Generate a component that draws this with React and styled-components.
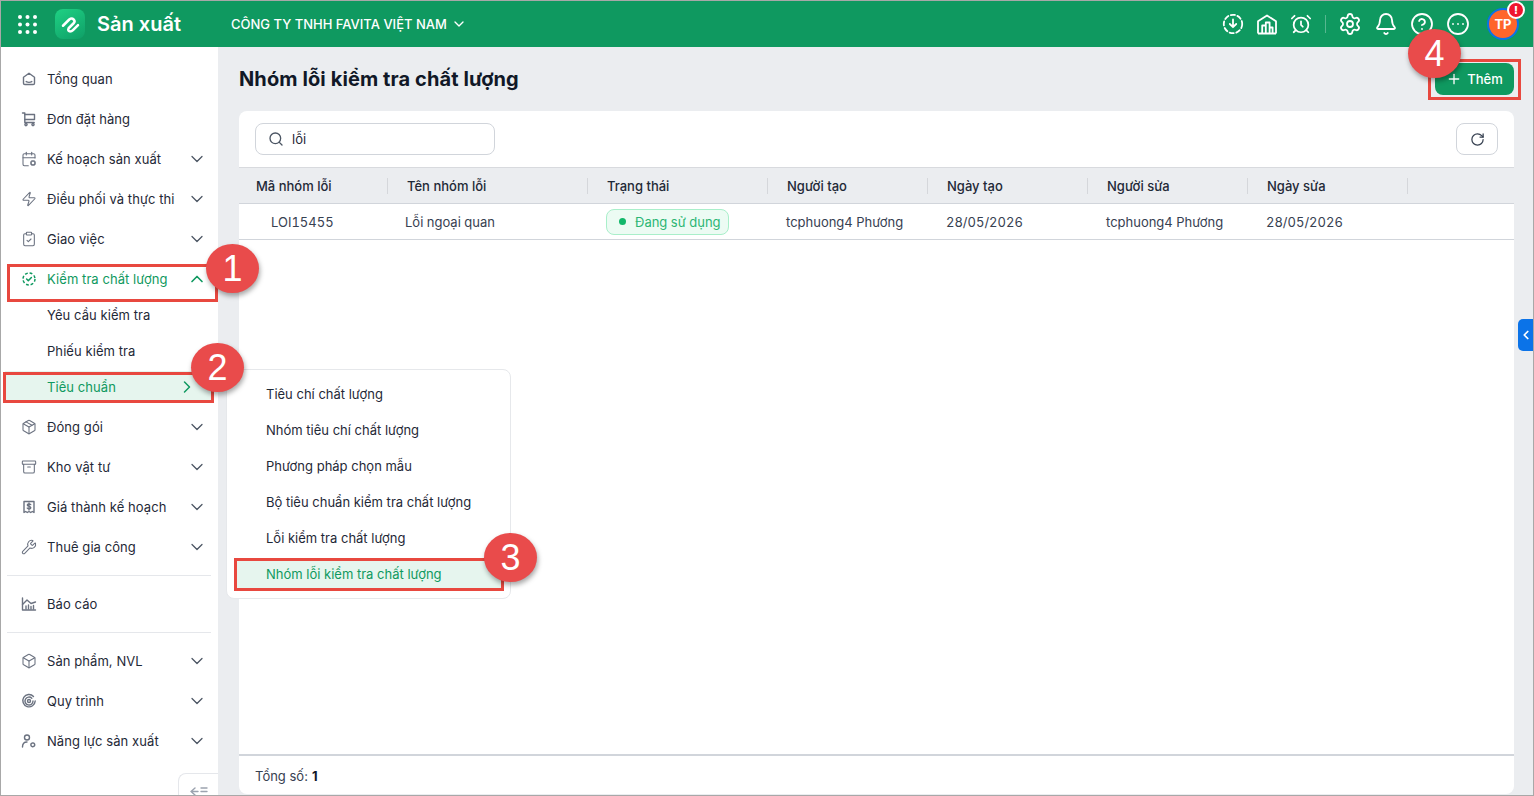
import React from 'react';
import styled, { createGlobalStyle } from 'styled-components';
import {
  AlarmClock, Archive, Bell, Box, CalendarCog, ChevronDown, ChevronLeft, ChevronRight, ChevronUp,
  CircleEllipsis, CircleHelp, ClipboardCheck, Package, Plus, RotateCw, Search, Settings,
  Wrench, Zap
} from 'lucide-react';

const GREEN = '#0f9960';
const TEXT = '#1f2937';

const GlobalStyle = createGlobalStyle`
  html, body { margin: 0; padding: 0; }
  body { font-family: Inter, "Noto Sans", sans-serif; color: ${TEXT}; font-size: 13px; }
  * { box-sizing: border-box; }
`;

const Frame = styled.div`
  position: relative;
  width: 1534px;
  height: 796px;
  border: 1px solid #a8a8a8;
  display: flex;
  flex-direction: column;
  overflow: hidden;
  background: #ebedf0;
`;

const Header = styled.header`
  height: 46px;
  flex: none;
  background: ${GREEN};
  color: #fff;
  display: flex;
  align-items: center;
  padding: 0 14px 0 17px;
`;

const Brand = styled.div`
  display: flex;
  align-items: center;
  gap: 12px;
  margin-left: 18px;
  font-size: 20px;
  font-weight: 600;
`;

const LogoBox = styled.div`
  width: 30px;
  height: 30px;
  border-radius: 8px;
  background: linear-gradient(150deg, #1fd184, #0f9f67);
  display: flex;
  align-items: center;
  justify-content: center;
`;

const Company = styled.div`
  display: flex;
  align-items: center;
  gap: 4px;
  margin-left: 50px;
  font-size: 13px;
  font-weight: 500;
`;

const HeaderTools = styled.div`
  margin-left: auto;
  display: flex;
  align-items: center;
`;

const ToolGroup = styled.div`
  display: flex;
  align-items: center;
  gap: ${(p) => p.$gap}px;
`;

const ToolDivider = styled.span`
  width: 1px;
  height: 18px;
  margin: 0 12px;
  background: rgba(255, 255, 255, 0.3);
`;

const Avatar = styled.div`
  position: relative;
  width: 32px;
  height: 32px;
  margin-left: 17px;
  border-radius: 50%;
  border: 2px solid #0b73e8;
  background: #ff652b;
  display: flex;
  align-items: center;
  justify-content: center;
  font-size: 13px;
  font-weight: 700;
`;

const AlertDot = styled.span`
  position: absolute;
  top: -9px;
  right: -8px;
  width: 18px;
  height: 18px;
  border-radius: 50%;
  border: 2px solid #fff;
  background: #f0142f;
  display: flex;
  align-items: center;
  justify-content: center;
  font-size: 11px;
  font-weight: 800;
`;

const Body = styled.div`
  flex: 1;
  display: flex;
  min-height: 0;
`;

const Sidebar = styled.aside`
  position: relative;
  width: 217px;
  flex: none;
  background: #fff;
  padding-top: 12px;
`;

const NavItem = styled.div`
  height: 40px;
  display: flex;
  align-items: center;
  padding: 0 11px 0 20px;
  letter-spacing: 0.07px;
  color: ${(p) => (p.$active ? GREEN : TEXT)};
  svg.lead { color: ${(p) => (p.$active ? GREEN : '#6b7280')}; }
`;

const NavLabel = styled.span`
  margin-left: 10px;
  flex: 1;
  white-space: nowrap;
`;

const SubList = styled.div`
  display: flex;
  flex-direction: column;
  gap: 4px;
  margin-bottom: 4px;
`;

const SubItem = styled.div`
  height: 32px;
  margin: 0 7px 0 4px;
  padding: 0 14px 0 42px;
  letter-spacing: 0.07px;
  display: flex;
  align-items: center;
  justify-content: space-between;
  background: ${(p) => (p.$active ? '#e6f5ee' : 'transparent')};
  color: ${(p) => (p.$active ? GREEN : TEXT)};
`;

const NavDivider = styled.hr`
  height: 1px;
  margin: 8px 7px 8px 6px;
  border: 0;
  background: #e5e7eb;
`;

const CollapseTab = styled.div`
  position: absolute;
  right: 0;
  bottom: 0;
  width: 40px;
  height: 22px;
  padding: 12px 0 0 11px;
  border: 1px solid #e5e7eb;
  border-width: 1px 0 0 1px;
  border-top-left-radius: 8px;
  overflow: hidden;
  color: #9ca3af;
`;

const Main = styled.main`
  flex: 1;
  min-width: 0;
  display: flex;
  flex-direction: column;
  padding: 0 19px 1px 21px;
`;

const TitleRow = styled.div`
  height: 64px;
  flex: none;
  display: flex;
  align-items: center;
  justify-content: space-between;
`;

const Title = styled.h1`
  margin: 0;
  font-size: 20px;
  font-weight: 700;
  letter-spacing: 0.1px;
  color: #111827;
`;

const AddButton = styled.button`
  width: 79px;
  height: 32px;
  border: 0;
  border-radius: 8px;
  background: ${GREEN};
  color: #fff;
  font: 500 13px Inter, sans-serif;
  display: flex;
  align-items: center;
  justify-content: center;
  gap: 5px;
`;

const Card = styled.section`
  flex: 1;
  min-height: 0;
  display: flex;
  flex-direction: column;
  background: #fff;
  border-radius: 8px;
`;

const Toolbar = styled.div`
  height: 56px;
  flex: none;
  display: flex;
  align-items: center;
  justify-content: space-between;
  padding: 0 16px;
`;

const SearchBox = styled.div`
  width: 240px;
  height: 32px;
  border: 1px solid #d1d5db;
  border-radius: 8px;
  display: flex;
  align-items: center;
  gap: 8px;
  padding: 0 12px;
  color: #4b5563;
`;

const SearchText = styled.span`
  color: ${TEXT};
`;

const RefreshButton = styled.button`
  width: 42px;
  height: 32px;
  border: 1px solid #d1d5db;
  border-radius: 8px;
  background: #fff;
  color: #374151;
  display: flex;
  align-items: center;
  justify-content: center;
`;

const COLUMNS = '149px 200px 180px 160px 160px 160px 160px 1fr';

const TableHead = styled.div`
  height: 37px;
  flex: none;
  display: grid;
  grid-template-columns: ${COLUMNS};
  align-items: center;
  background: #ebedf0;
  border-top: 1px solid #d8dade;
  border-bottom: 1px solid #d1d5db;
`;

const HeadCell = styled.div`
  position: relative;
  padding-left: ${(p) => (p.$first ? 17 : 19)}px;
  font-weight: 500;
  color: ${TEXT};
  &::after {
    content: '';
    position: absolute;
    right: 0;
    top: 0;
    width: 1px;
    height: 16px;
    background: #d5d7db;
    display: ${(p) => (p.$plain ? 'none' : 'block')};
  }
`;

const TableRow = styled.div`
  height: 36px;
  flex: none;
  display: grid;
  grid-template-columns: ${COLUMNS};
  align-items: center;
  border-bottom: 1px solid #d1d5db;
  color: #374151;
  font-variant-numeric: tabular-nums;
`;

const Cell = styled.div`
  padding-left: ${(p) => p.$pad || 18}px;
  white-space: nowrap;
`;

const StatusBadge = styled.span`
  display: inline-flex;
  align-items: center;
  gap: 9px;
  width: 123px;
  height: 26px;
  padding-left: 12px;
  border: 1px solid #a9efca;
  border-radius: 8px;
  background: #ecfbf3;
  color: #2bb673;
  &::before {
    content: '';
    width: 7px;
    height: 7px;
    border-radius: 50%;
    background: #12b76a;
  }
`;

const Spacer = styled.div`
  flex: 1;
`;

const Footer = styled.div`
  height: 40px;
  flex: none;
  display: flex;
  align-items: center;
  gap: 4px;
  padding: 1px 0 0 16px;
  border-top: 2px solid #d1d5db;
  color: #374151;
  b { font-weight: 700; color: #111827; }
`;

const Popup = styled.div`
  position: absolute;
  left: 225px;
  top: 368px;
  width: 285px;
  height: 230px;
  padding: 9px 8px;
  display: flex;
  flex-direction: column;
  gap: 4px;
  background: #fff;
  border: 1px solid #e6e8eb;
  border-radius: 8px;
`;

const PopupItem = styled.div`
  height: 32px;
  flex: none;
  padding: 0 0 2px 31px;
  display: flex;
  align-items: center;
  background: ${(p) => (p.$active ? '#e6f5ee' : 'transparent')};
  color: ${(p) => (p.$active ? GREEN : TEXT)};
`;

const RedBox = styled.div`
  position: absolute;
  left: ${(p) => p.$x}px;
  top: ${(p) => p.$y}px;
  width: ${(p) => p.$w}px;
  height: ${(p) => p.$h}px;
  border: 3px solid #e8483f;
  pointer-events: none;
`;

const StepBadge = styled.div`
  position: absolute;
  left: ${(p) => p.$x - 27}px;
  top: ${(p) => p.$y - 25}px;
  width: 53px;
  height: 49px;
  border-radius: 50%;
  background: #e94b4b;
  box-shadow: 1px 3px 5px rgba(0, 0, 0, 0.35);
  color: #fff;
  font: 400 36px "Liberation Sans", Arial, sans-serif;
  display: flex;
  align-items: center;
  justify-content: center;
`;

const SideTab = styled.div`
  position: absolute;
  right: 0;
  top: 318px;
  width: 15px;
  height: 32px;
  border-radius: 5px 0 0 5px;
  background: #0b73e8;
  color: #fff;
  display: flex;
  align-items: center;
  justify-content: center;
`;

const AlarmSlot = styled.span`
  width: 24px;
  height: 24px;
  display: flex;
  align-items: center;
  justify-content: center;
`;

const Stroke = ({ children }) => (
  <svg className="lead" width="16" height="16" viewBox="0 0 16 16" fill="none" stroke="currentColor" strokeWidth="1.4" strokeLinecap="round" strokeLinejoin="round">
    {children}
  </svg>
);

const HomeIcon = () => (
  <Stroke>
    <path d="M2.5 6.3 8 2.2l5.5 4.1v5.9a1.3 1.3 0 0 1-1.3 1.3H3.8a1.3 1.3 0 0 1-1.3-1.3Z" />
    <path d="M5.2 10.6c1.7.9 3.9.9 5.6 0" />
  </Stroke>
);

const CartIcon = () => (
  <Stroke>
    <path d="M1.5 2h2.3v9.5h9.4" />
    <path d="M3.8 3.5h9.7v5H3.8" />
    <circle cx="5" cy="13.6" r="1.1" />
    <circle cx="12" cy="13.6" r="1.1" />
  </Stroke>
);

const QualityIcon = () => (
  <Stroke>
    <circle cx="8" cy="8" r="6" strokeDasharray="2.8 1.9" strokeLinecap="butt" strokeWidth="1.5" />
    <path d="m5.6 8 1.7 1.7 3.1-3.2" strokeWidth="1.5" />
  </Stroke>
);

const CostIcon = () => (
  <Stroke>
    <path d="M3 2.5h10v11l-1.7-1-1.6 1-1.7-1-1.7 1-1.6-1-1.7 1Z" />
    <path d="M9.7 5.6c-.4-.5-1-.7-1.7-.7-1 0-1.7.4-1.7 1.2 0 1.7 3.5.9 3.5 2.6 0 .8-.8 1.2-1.8 1.2-.7 0-1.3-.3-1.7-.8M8 4v7" />
  </Stroke>
);

const ReportIcon = () => (
  <Stroke>
    <path d="M1.5 2v12h13" />
    <path d="M1.5 8.5 6 4l4 3.5 4.5-1.5" />
    <path d="M5 13v-3M7.5 13V9M10 13v-2.5M12.5 13V9.5" />
  </Stroke>
);

const ProcessIcon = () => (
  <Stroke>
    <path d="M12.5 3.4A6.2 6.2 0 1 0 14.2 8" />
    <path d="M10.8 5.2A4 4 0 1 0 12 8" />
    <circle cx="8" cy="8" r="1.5" />
  </Stroke>
);

const CapacityIcon = () => (
  <Stroke>
    <circle cx="6" cy="4.5" r="2.5" />
    <path d="M1.5 14c0-3 1.8-5 4.5-5" />
    <circle cx="11.8" cy="11.8" r="1.9" strokeDasharray="1.2 0.6" strokeWidth="1.5" />
  </Stroke>
);

const AppsIcon = () => (
  <svg width="19" height="19" viewBox="0 0 19 19" fill="#fff">
    {[2, 9.5, 17].map((cy) => [2, 9.5, 17].map((cx) => <circle key={`${cx}-${cy}`} cx={cx} cy={cy} r="2" />))}
  </svg>
);

const LogoMark = () => (
  <svg width="25" height="25" viewBox="0 0 20 20" fill="none" stroke="#fff" strokeWidth="2" strokeLinecap="round" strokeLinejoin="round">
    <path d="M4 11 9 6Q11 4.5 12.5 6 14 7.5 12.5 9L8.5 13Q7.5 15 9.5 15.5 11 15.5 12 14.5L16 10.5" />
  </svg>
);

const DownloadIcon = () => (
  <svg width="24" height="24" viewBox="-1 -1 24 24" fill="none" stroke="#fff" strokeWidth="1.8" strokeLinecap="round" strokeLinejoin="round">
    <circle cx="11" cy="11" r="9.2" strokeDasharray="4.2 2.6" />
    <path d="M11 6.5v7.5M7.8 11l3.2 3.2 3.2-3.2" />
  </svg>
);

const DepotIcon = () => (
  <svg width="24" height="24" viewBox="-1 -1 24 24" fill="none" stroke="#fff" strokeWidth="1.8" strokeLinejoin="round">
    <path d="M2 20.5V8.3L11 2.5l9 5.8v12.2" />
    <path d="M6.2 20.5v-8h3.6v8M9.8 20.5V9.5h3.8v11M13.6 14.5h3v6M2 20.5h18" />
  </svg>
);

const navTop = [
  { label: 'Tổng quan', icon: <HomeIcon /> },
  { label: 'Đơn đặt hàng', icon: <CartIcon /> },
  { label: 'Kế hoạch sản xuất', icon: <CalendarCog className="lead" size={16} strokeWidth={1.6} />, more: true },
  { label: 'Điều phối và thực thi', icon: <Zap className="lead" size={16} strokeWidth={1.6} />, more: true },
  { label: 'Giao việc', icon: <ClipboardCheck className="lead" size={16} strokeWidth={1.6} />, more: true }
];

const navMiddle = [
  { label: 'Đóng gói', icon: <Package className="lead" size={16} strokeWidth={1.6} />, more: true },
  { label: 'Kho vật tư', icon: <Archive className="lead" size={16} strokeWidth={1.6} />, more: true },
  { label: 'Giá thành kế hoạch', icon: <CostIcon />, more: true },
  { label: 'Thuê gia công', icon: <Wrench className="lead" size={16} strokeWidth={1.6} />, more: true }
];

const navBottom = [
  { label: 'Sản phẩm, NVL', icon: <Box className="lead" size={16} strokeWidth={1.6} />, more: true },
  { label: 'Quy trình', icon: <ProcessIcon />, more: true },
  { label: 'Năng lực sản xuất', icon: <CapacityIcon />, more: true }
];

const popupItems = [
  'Tiêu chí chất lượng',
  'Nhóm tiêu chí chất lượng',
  'Phương pháp chọn mẫu',
  'Bộ tiêu chuẩn kiểm tra chất lượng',
  'Lỗi kiểm tra chất lượng',
  'Nhóm lỗi kiểm tra chất lượng'
];

const headers = ['Mã nhóm lỗi', 'Tên nhóm lỗi', 'Trạng thái', 'Người tạo', 'Ngày tạo', 'Người sửa', 'Ngày sửa'];

function NavRow({ item }) {
  return (
    <NavItem>
      {item.icon}
      <NavLabel>{item.label}</NavLabel>
      {item.more ? <ChevronDown size={20} color="#4b5563" strokeWidth={1.5} /> : null}
    </NavItem>
  );
}

export default function App() {
  return (
    <Frame>
      <GlobalStyle />
      <Header>
        <AppsIcon />
        <Brand>
          <LogoBox><LogoMark /></LogoBox>
          Sản xuất
        </Brand>
        <Company>
          CÔNG TY TNHH FAVITA VIỆT NAM
          <ChevronDown size={16} strokeWidth={2} />
        </Company>
        <HeaderTools>
          <ToolGroup $gap={10}>
            <DownloadIcon />
            <DepotIcon />
            <AlarmSlot><AlarmClock size={22} strokeWidth={1.9} /></AlarmSlot>
          </ToolGroup>
          <ToolDivider />
          <ToolGroup $gap={12}>
            <Settings size={24} strokeWidth={1.8} />
            <Bell size={24} strokeWidth={1.8} />
            <CircleHelp size={24} strokeWidth={1.8} />
            <CircleEllipsis size={24} strokeWidth={1.8} />
          </ToolGroup>
          <Avatar>
            TP
            <AlertDot>!</AlertDot>
          </Avatar>
        </HeaderTools>
      </Header>
      <Body>
        <Sidebar>
          {navTop.map((item) => <NavRow key={item.label} item={item} />)}
          <NavItem $active>
            <QualityIcon />
            <NavLabel>Kiểm tra chất lượng</NavLabel>
            <ChevronUp size={20} strokeWidth={2} />
          </NavItem>
          <SubList>
            <SubItem>Yêu cầu kiểm tra</SubItem>
            <SubItem>Phiếu kiểm tra</SubItem>
            <SubItem $active>
              Tiêu chuẩn
              <ChevronRight size={20} strokeWidth={1.8} />
            </SubItem>
          </SubList>
          {navMiddle.map((item) => <NavRow key={item.label} item={item} />)}
          <NavDivider />
          <NavRow item={{ label: 'Báo cáo', icon: <ReportIcon /> }} />
          <NavDivider />
          {navBottom.map((item) => <NavRow key={item.label} item={item} />)}
          <CollapseTab>
            <svg width="18" height="12" viewBox="0 0 18 12" fill="none" stroke="currentColor" strokeWidth="1.4" strokeLinecap="round" strokeLinejoin="round">
              <path d="M5 1 1 4.5 5 8M1 4.5h7M11 1h6M11 4.5h6" />
            </svg>
          </CollapseTab>
        </Sidebar>
        <Main>
          <TitleRow>
            <Title>Nhóm lỗi kiểm tra chất lượng</Title>
            <AddButton>
              <Plus size={16} strokeWidth={2} />
              Thêm
            </AddButton>
          </TitleRow>
          <Card>
            <Toolbar>
              <SearchBox>
                <Search size={16} strokeWidth={2} />
                <SearchText>lỗi</SearchText>
              </SearchBox>
              <RefreshButton><RotateCw size={15} strokeWidth={2} /></RefreshButton>
            </Toolbar>
            <TableHead>
              {headers.map((title, i) => <HeadCell key={title} $first={i === 0}>{title}</HeadCell>)}
              <HeadCell $plain />
            </TableHead>
            <TableRow>
              <Cell $pad={32}>LOI15455</Cell>
              <Cell $pad={17}>Lỗi ngoại quan</Cell>
              <Cell><StatusBadge>Đang sử dụng</StatusBadge></Cell>
              <Cell>tcphuong4 Phương</Cell>
              <Cell>28/05/2026</Cell>
              <Cell>tcphuong4 Phương</Cell>
              <Cell>28/05/2026</Cell>
            </TableRow>
            <Spacer />
            <Footer>
              Tổng số:
              <b>1</b>
            </Footer>
          </Card>
        </Main>
      </Body>

      <Popup>
        {popupItems.map((label, i) => (
          <PopupItem key={label} $active={i === popupItems.length - 1}>{label}</PopupItem>
        ))}
      </Popup>

      <SideTab><ChevronLeft size={14} strokeWidth={3} /></SideTab>

      <RedBox $x={6} $y={263} $w={211} $h={38} />
      <RedBox $x={2} $y={371} $w={211} $h={31} />
      <RedBox $x={233} $y={557} $w={270} $h={33} />
      <RedBox $x={1427} $y={58} $w={93} $h={41} />

      <StepBadge $x={232} $y={268}>1</StepBadge>
      <StepBadge $x={217} $y={367}>2</StepBadge>
      <StepBadge $x={510} $y={557}>3</StepBadge>
      <StepBadge $x={1434} $y={53}>4</StepBadge>
    </Frame>
  );
}
